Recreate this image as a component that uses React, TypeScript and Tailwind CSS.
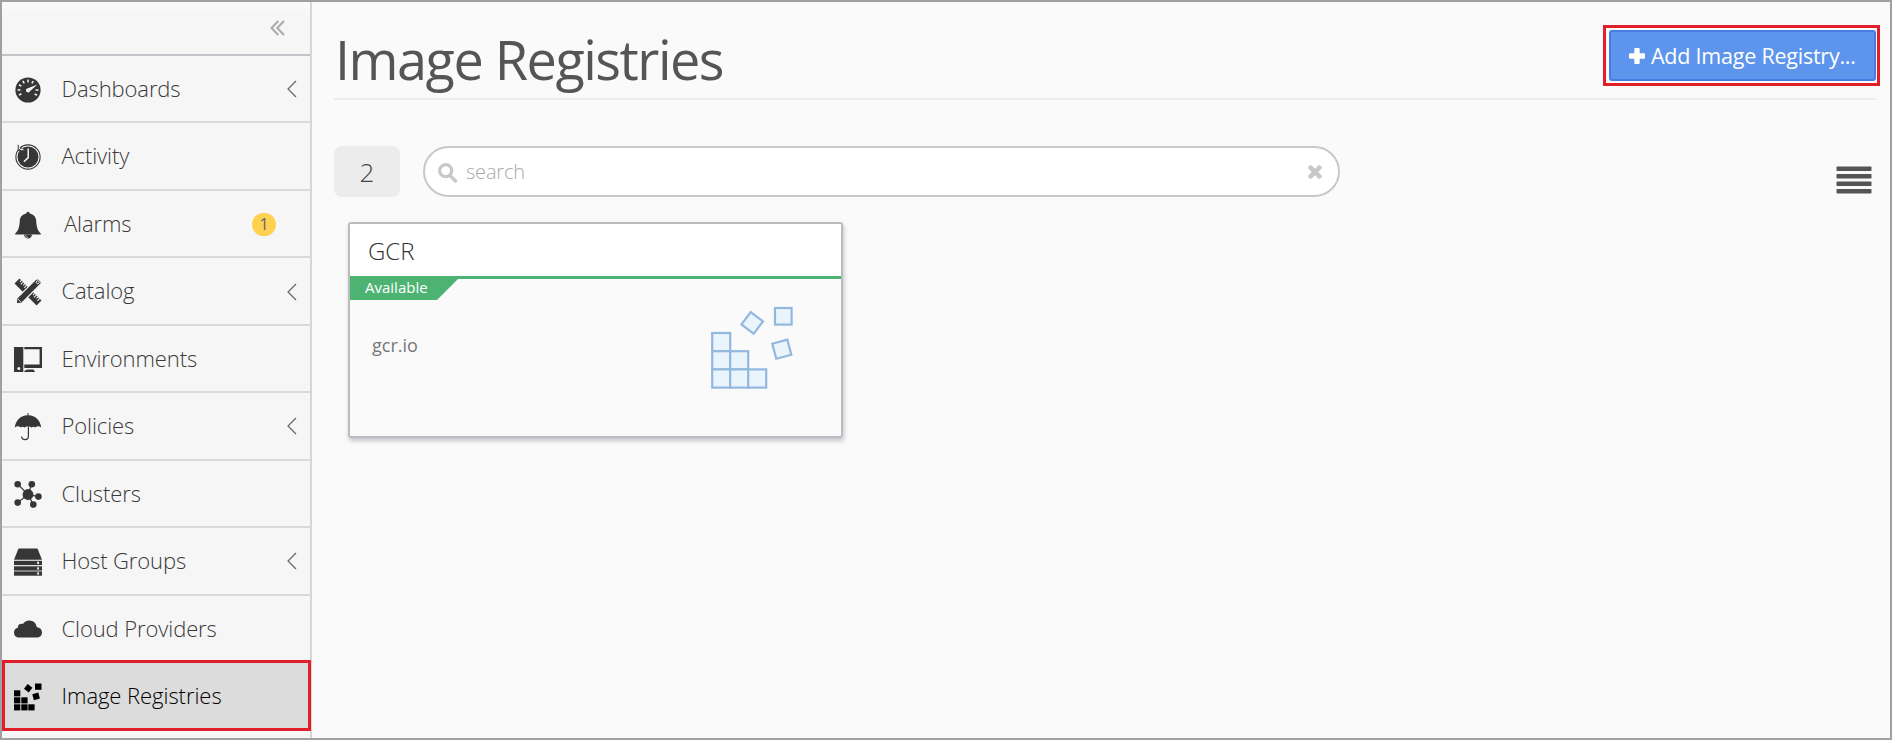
import type { ReactNode } from "react";

const DARK = "#363636";

function DashboardIcon() {
  const ticks = [-120, -90, -60, -30, 0, 30, 90, 120];
  return (
    <svg width="28" height="28" viewBox="0 0 28 28">
      <circle cx="14" cy="14" r="12.6" fill={DARK} />
      {ticks.map((a) => (
        <rect key={a} x="13.3" y="3.6" width="1.5" height="2.8" fill="#f6f6f6" transform={`rotate(${a} 14 14)`} />
      ))}
      <path d="M23.4 8.4 15.9 15.2a2.1 2.1 0 1 1-2-3Z" fill="#f6f6f6" />
    </svg>
  );
}

function ActivityIcon() {
  return (
    <svg width="28" height="28" viewBox="0 0 28 28">
      <circle cx="14" cy="14" r="12.1" fill="#f6f6f6" stroke={DARK} strokeWidth="1.1" />
      <circle cx="14" cy="14" r="10.5" fill={DARK} />
      <path d="M2.5 1.5 4.6 3 5.6 4.6 9.6 6.6 10.5 7.8H3.8Z" fill="#f6f6f6" />
      <path d="M4.2 1.8V7.7H10.2M4.5 7.4 8 4.6" fill="none" stroke={DARK} strokeWidth="1" />
      <path d="M14.2 5.5V14.6L9.9 18.8" fill="none" stroke="#f6f6f6" strokeWidth="1.5" />
    </svg>
  );
}

function BellIcon() {
  return (
    <svg width="28" height="28" viewBox="0 0 28 28">
      <path
        d="M14 .8c1 0 1.6.7 1.7 1.7 4 .8 6.300 3.500 6.500 7.200.3 5.600 1 9.300 4.600 12.900v1H1.200v-1c3.600-3.600 4.300-7.300 4.600-12.900.2-3.700 2.500-6.400 6.500-7.200.1-1 .7-1.700 1.700-1.700Z"
        fill={DARK}
      />
      <path d="M10 23.5h8c-.3 2.5-1.9 4-4 4s-3.7-1.5-4-4Z" fill={DARK} />
      <path d="M11.6 24.3c.2 1.3 1 2.1 2.3 2.2" fill="none" stroke="#f6f6f6" strokeWidth=".8" />
    </svg>
  );
}

function CatalogIcon() {
  return (
    <svg width="28" height="28" viewBox="0 0 28 28">
      <g transform="rotate(45 14 14)">
        <rect x="-1.6" y="10.5" width="31.2" height="7" fill={DARK} />
        {[0.6, 3, 5.4, 7.8, 19.2, 21.6, 24, 26.4].map((x, i) => (
          <rect key={x} x={x} y="10" width="1" height={i % 2 ? 3.6 : 2.6} fill="#f6f6f6" />
        ))}
      </g>
      <g transform="rotate(-45 14 14)">
        <path
          d="M-2.6 14 1.6 10.6H28a2.6 2.6 0 0 1 2.6 2.6v1.6a2.6 2.6 0 0 1-2.6 2.6H1.6Z"
          fill={DARK}
          stroke="#f6f6f6"
          strokeWidth="1.2"
        />
        <circle cx="27.8" cy="14" r="1.5" fill="none" stroke="#f6f6f6" strokeWidth=".9" />
        <path d="M1.9 11.4V16.6" stroke="#f6f6f6" strokeWidth=".8" />
      </g>
    </svg>
  );
}

function EnvironmentsIcon() {
  return (
    <svg width="28" height="28" viewBox="0 0 28 28">
      <rect x="0" y="2" width="9.3" height="25" fill={DARK} />
      <circle cx="4.8" cy="23.6" r="1.5" fill="#f6f6f6" />
      <path d="M10.3 2H28V23H10.3V19.5H25.6V4.3H10.3Z" fill={DARK} />
      <path d="M13 24.5h6.5l1.7 2.5H10.3V26Z" fill={DARK} />
    </svg>
  );
}

function UmbrellaIcon() {
  return (
    <svg width="28" height="28" viewBox="0 0 28 28">
      <path
        d="M13.5 0h1v2.2C21.2 2.5 26.5 7.2 27.2 14.6c-2-1.8-4.3-1.8-6 0-1.2-1.2-2.6-1.2-3.6 0-1.5-1.6-5.7-1.6-7.2 0-1-1.2-2.4-1.2-3.6 0-1.7-1.8-4-1.8-6 0C1.5 7.2 6.8 2.5 13.5 2.2Z"
        fill={DARK}
      />
      <path d="M14.4 13.5V23.2c0 4.4-6.8 4.4-6.8.3" fill="none" stroke={DARK} strokeWidth="1.2" />
    </svg>
  );
}

function ClustersIcon() {
  const nodes = [
    [3.7, 4.2],
    [17.8, 4.2],
    [24.4, 16.6],
    [3.7, 22.6],
    [19.3, 24.6],
  ];
  return (
    <svg width="28" height="28" viewBox="0 0 28 28">
      {nodes.map(([x, y]) => (
        <g key={`${x}-${y}`}>
          <path d={`M14 14.5 ${x} ${y}`} stroke={DARK} strokeWidth="1.2" />
          <circle cx={x} cy={y} r="3.3" fill={DARK} />
        </g>
      ))}
      <circle cx="14" cy="14.5" r="5.4" fill={DARK} />
    </svg>
  );
}

function HostGroupsIcon() {
  return (
    <svg width="28" height="28" viewBox="0 0 28 28">
      <path d="M4.5 .5H23.5L28 11.8H0Z" fill={DARK} />
      {[12.8, 18.3, 23.4].map((y) => (
        <g key={y}>
          <rect x="0" y={y} width="28" height="4.3" fill={DARK} />
          <rect x="23.2" y={y + 1} width="1.8" height="2.2" fill="#f6f6f6" />
        </g>
      ))}
    </svg>
  );
}

function CloudIcon() {
  return (
    <svg width="28" height="28" viewBox="0 0 28 28">
      <path
        d="M5.5 22.6C2 22.6 0 20.4 0 17.5c0-2.6 1.7-4.3 3.8-4.8C3.7 9.6 6.3 8 8.9 8.9 10.3 6.8 12.5 5.5 15.2 5.5c4.2 0 7 2.8 7.5 6.5 3.2.5 5.3 2.6 5.3 5.4 0 3.1-2.3 5.2-5.5 5.2Z"
        fill={DARK}
      />
    </svg>
  );
}

function RegistryIcon() {
  return (
    <svg width="28" height="28" viewBox="0 0 28 28" fill="#000">
      <rect x="0" y="7.3" width="6.3" height="6.1" />
      <rect x="0" y="14.3" width="6.3" height="6.1" />
      <rect x="7.3" y="14.3" width="6.3" height="6.1" />
      <rect x="0" y="21.3" width="6.3" height="6.1" />
      <rect x="7.3" y="21.3" width="6.3" height="6.1" />
      <rect x="14.3" y="21.3" width="6.3" height="6.1" />
      <rect x="21" y="0.5" width="6.5" height="6.3" />
      <rect x="11.2" y="2.2" width="6" height="6" transform="rotate(38 14.2 5.2)" />
      <rect x="19" y="10.3" width="6.2" height="6.2" transform="rotate(-15 22.1 13.4)" />
    </svg>
  );
}

function RegistryArt() {
  return (
    <svg width="84" height="84" viewBox="0 0 84 84" fill="#e9f4fd" stroke="#93b8de" strokeWidth="2.2">
      <rect x="2.2" y="27" width="18" height="18.2" />
      <rect x="2.2" y="45.2" width="18" height="18.2" />
      <rect x="20.2" y="45.2" width="18" height="18.2" />
      <rect x="2.2" y="63.4" width="18" height="18.2" />
      <rect x="20.2" y="63.4" width="18" height="18.2" />
      <rect x="38.2" y="63.4" width="18" height="18.2" />
      <rect x="65" y="2" width="16.6" height="16.6" />
      <rect x="34.5" y="9.2" width="15.4" height="15.4" transform="rotate(37 42.2 16.9)" />
      <rect x="64" y="35.4" width="15.6" height="15.6" transform="rotate(-15 71.8 43.2)" />
    </svg>
  );
}

type Item = { label: string; icon: ReactNode; arrow?: boolean; badge?: string };

const items: Item[] = [
  { label: "Dashboards", icon: <DashboardIcon />, arrow: true },
  { label: "Activity", icon: <ActivityIcon /> },
  { label: "Alarms", icon: <BellIcon />, badge: "1" },
  { label: "Catalog", icon: <CatalogIcon />, arrow: true },
  { label: "Environments", icon: <EnvironmentsIcon /> },
  { label: "Policies", icon: <UmbrellaIcon />, arrow: true },
  { label: "Clusters", icon: <ClustersIcon /> },
  { label: "Host Groups", icon: <HostGroupsIcon />, arrow: true },
  { label: "Cloud Providers", icon: <CloudIcon /> },
];

function SidebarItem({ item }: { item: Item }) {
  return (
    <li className="flex h-[67.45px] shrink-0 items-center border-b-2 border-[#d9d9d9] pl-3 pr-[13px]">
      <span className="pt-[2px]">{item.icon}</span>
      <span className={item.badge ? "ml-[22px] pb-[0.4px]" : "ml-[19.5px] pb-[0.4px]"}>{item.label}</span>
      {item.badge && (
        <span className="ml-auto mr-[21px] mt-px flex h-[23px] w-6 items-center justify-center rounded-full bg-[#ffd151] pb-px text-base font-normal leading-none text-[#666]">
          {item.badge}
        </span>
      )}
      {item.arrow && (
        <svg className="ml-auto mt-px" width="10" height="18" viewBox="0 0 10 18" fill="none" stroke="#666" strokeWidth="1.2">
          <path d="M9 1 1 9l8 8" />
        </svg>
      )}
    </li>
  );
}

export default function App() {
  return (
    <div className="flex h-[740px] w-[1892px] overflow-hidden border-2 border-[#a0a0a0] bg-[#fafafa] font-['Open_Sans',sans-serif] font-light text-[#555]">
      <aside className="flex w-[310px] shrink-0 flex-col border-r-2 border-[#d6d6d6] bg-[#f6f6f6] text-[22px] tracking-[-0.1px] text-[#3a3a3a]">
        <div className="flex h-[54px] shrink-0 items-center justify-end border-b-2 border-[#c3c3c9] bg-linear-to-b from-[#fbfbfb] to-[#f6f6f6] to-25% pr-[25px]">
          <svg width="15" height="16" viewBox="0 0 15 16" fill="none" stroke="#aaa" strokeWidth="2">
            <path d="M8.3 1 1.5 8l6.8 7M14 1 7.2 8l6.8 7" />
          </svg>
        </div>
        <ul className="flex flex-col">
          {items.map((item) => (
            <SidebarItem key={item.label} item={item} />
          ))}
        </ul>
        <div className="-mr-px mt-[-3px] flex h-[71px] shrink-0 items-center border-3 border-[#e11f2a] bg-[#dcdcdc] pl-[9px] text-black">
          <span className="pt-[3px]">
            <RegistryIcon />
          </span>
          <span className="ml-[19.5px] tracking-[-0.05px]">Image Registries</span>
        </div>
      </aside>

      <main className="flex min-w-0 flex-1 flex-col pl-[22px] pr-[14px]">
        <header className="flex h-[98px] shrink-0 items-start justify-between border-b-2 border-[#ececec]">
          <h1 className="pl-px pt-[20px] text-[54px] font-normal leading-[74px] tracking-[-1.5px]">Image Registries</h1>
          <div className="-mr-1 mt-[23px] h-[61px] w-[277px] shrink-0 border-3 border-[#e11f2a] pb-[2px] pl-[3px] pr-px pt-[2px]">
            <button className="flex h-[51px] w-[267px] items-center rounded-[3px] border-2 border-[#477ce0] bg-[#5d95ec] pl-[17px] text-[21.5px] font-normal tracking-[-0.23px] text-white">
              <svg width="18" height="18" viewBox="0 0 18 18" fill="#fff">
                <path d="M7.3 1h3.4c.6 0 1 .4 1 1v4.3H16c.6 0 1 .4 1 1v3.4c0 .6-.4 1-1 1h-4.3V16c0 .6-.4 1-1 1H7.3c-.6 0-1-.4-1-1v-4.3H2c-.6 0-1-.4-1-1V7.3c0-.6.4-1 1-1h4.3V2c0-.6.4-1 1-1Z" />
              </svg>
              <span className="ml-[5px] whitespace-nowrap pt-[2px]">Add Image Registry...</span>
            </button>
          </div>
        </header>

        <div className="flex items-start pt-[46px]">
          <div className="flex h-[51px] w-[66px] items-center justify-center rounded-lg bg-[#ececec] pt-px text-[26px] text-[#444]">2</div>
          <div className="ml-[23px] flex h-[51px] w-[917px] items-center rounded-[26px] border-2 border-[#c8c8c8] bg-white pl-[13px] pr-[16px]">
            <svg width="20" height="21" viewBox="0 0 20 21" className="mt-[3px]" fill="none" stroke="#c8c8c8">
              <circle cx="7.7" cy="7.7" r="6" strokeWidth="3.2" />
              <path d="M12 12.5 18.5 19" strokeWidth="3.4" />
            </svg>
            <span className="ml-2 pt-px text-[20px] tracking-[-0.2px] text-[#aaa]">search</span>
            <svg className="ml-auto mt-px" width="14" height="14" viewBox="0 0 14 14" fill="none" stroke="#c8c8c8" strokeWidth="4.6" strokeLinecap="round">
              <path d="M2.6 2.6 11.4 11.4M11.4 2.6 2.6 11.4" />
            </svg>
          </div>
          <svg className="ml-auto mr-1 mt-5" width="36" height="28" viewBox="0 0 36 28" fill="#555">
            <rect x=".5" y=".4" width="35" height="4.6" rx=".8" />
            <rect x=".5" y="7.9" width="35" height="4.6" rx=".8" />
            <rect x=".5" y="15.4" width="35" height="4.6" rx=".8" />
            <rect x=".5" y="22.9" width="35" height="4.6" rx=".8" />
          </svg>
        </div>

        <section className="ml-[14px] mt-[25px] flex h-[216px] w-[495px] flex-col rounded-[3px] border-2 border-[#bbb] shadow-[1px_3px_4px_rgba(90,100,120,0.35)]">
          <h2 className="h-[52px] bg-white pl-[18px] text-[24px] leading-[54px] text-[#333]">GCR</h2>
          <div className="h-[3px] bg-[#4db373]" />
          <div className="-mt-[3px] h-6 w-[112px] bg-[#4db373] pl-[15px] text-[15px] font-normal leading-[22px] text-white [clip-path:polygon(0_0,112px_0,108px_3px,87px_24px,0_24px)]">
            Available
          </div>
          <div className="flex justify-between pl-[22px] pr-[47px] pt-[6px]">
            <span className="pt-[26px] text-[18px] font-normal leading-[26px] text-[#777]">gcr.io</span>
            <RegistryArt />
          </div>
        </section>
      </main>
    </div>
  );
}
